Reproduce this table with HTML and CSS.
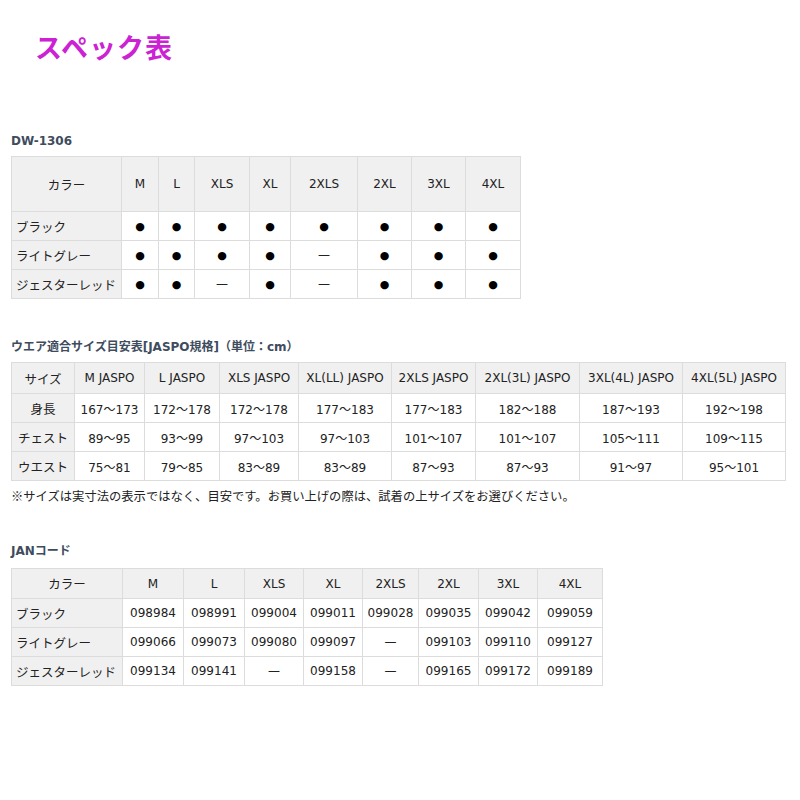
FILE: index.html
```html
<!DOCTYPE html>
<html lang="ja">
<head>
<meta charset="utf-8">
<title>スペック表</title>
<link rel="stylesheet" href="styles.css">
</head>
<body>
<div class="page">
  <h1 class="title">スペック表</h1>

  <h2 class="sec sec-1">DW-1306</h2>
  <table class="spec t1">
    <colgroup><col><col><col><col><col><col><col><col><col></colgroup>
    <thead>
      <tr><th>カラー</th><th>M</th><th>L</th><th>XLS</th><th>XL</th><th>2XLS</th><th>2XL</th><th>3XL</th><th>4XL</th></tr>
    </thead>
    <tbody>
      <tr><th class="rh">ブラック</th><td>●</td><td>●</td><td>●</td><td>●</td><td>●</td><td>●</td><td>●</td><td>●</td></tr>
      <tr><th class="rh">ライトグレー</th><td>●</td><td>●</td><td>●</td><td>●</td><td class="dash">—</td><td>●</td><td>●</td><td>●</td></tr>
      <tr><th class="rh">ジェスターレッド</th><td>●</td><td>●</td><td class="dash">—</td><td>●</td><td class="dash">—</td><td>●</td><td>●</td><td>●</td></tr>
    </tbody>
  </table>

  <h2 class="sec sec-2">ウエア適合サイズ目安表[JASPO規格]（単位：cm）</h2>
  <table class="spec t2">
    <colgroup><col><col><col><col><col><col><col><col><col></colgroup>
    <thead>
      <tr><th>サイズ</th><th>M JASPO</th><th>L JASPO</th><th>XLS JASPO</th><th>XL(LL) JASPO</th><th>2XLS JASPO</th><th>2XL(3L) JASPO</th><th>3XL(4L) JASPO</th><th>4XL(5L) JASPO</th></tr>
    </thead>
    <tbody>
      <tr><th class="rhc">身長</th><td>167～173</td><td>172～178</td><td>172～178</td><td>177～183</td><td>177～183</td><td>182～188</td><td>187～193</td><td>192～198</td></tr>
      <tr><th class="rhc">チェスト</th><td>89～95</td><td>93～99</td><td>97～103</td><td>97～103</td><td>101～107</td><td>101～107</td><td>105～111</td><td>109～115</td></tr>
      <tr><th class="rhc">ウエスト</th><td>75～81</td><td>79～85</td><td>83～89</td><td>83～89</td><td>87～93</td><td>87～93</td><td>91～97</td><td>95～101</td></tr>
    </tbody>
  </table>
  <p class="note">※サイズは実寸法の表示ではなく、目安です。お買い上げの際は、試着の上サイズをお選びください。</p>

  <h2 class="sec sec-3">JANコード</h2>
  <table class="spec t3">
    <colgroup><col><col><col><col><col><col><col><col><col></colgroup>
    <thead>
      <tr><th>カラー</th><th>M</th><th>L</th><th>XLS</th><th>XL</th><th>2XLS</th><th>2XL</th><th>3XL</th><th>4XL</th></tr>
    </thead>
    <tbody>
      <tr><th class="rh">ブラック</th><td>098984</td><td>098991</td><td>099004</td><td>099011</td><td>099028</td><td>099035</td><td>099042</td><td>099059</td></tr>
      <tr><th class="rh">ライトグレー</th><td>099066</td><td>099073</td><td>099080</td><td>099097</td><td class="dash">—</td><td>099103</td><td>099110</td><td>099127</td></tr>
      <tr><th class="rh">ジェスターレッド</th><td>099134</td><td>099141</td><td class="dash">—</td><td>099158</td><td class="dash">—</td><td>099165</td><td>099172</td><td>099189</td></tr>
    </tbody>
  </table>
</div>
</body>
</html>
```

FILE: styles.css
```css
html, body {
  margin: 0;
  padding: 0;
  background: #ffffff;
}

body {
  font-family: "DejaVu Sans", "Noto Sans CJK JP", sans-serif;
  font-size: 12px;
  color: #222222;
}

.page {
  padding: 0 0 0 11px;
  display: flex;
  flex-direction: column;
  align-items: flex-start;
}

.title {
  margin: 31px 0 0 24px;
  font-family: "Noto Sans CJK JP", sans-serif;
  font-size: 27px;
  line-height: 32px;
  font-weight: 700;
  color: #cc22d4;
  letter-spacing: 1px;
}

.sec {
  margin: 0;
  font-family: "DejaVu Sans", "Noto Sans CJK JP", sans-serif;
  font-size: 12px;
  line-height: 16px;
  font-weight: 700;
  color: #3e4c5e;
}

.sec-1 { margin-top: 70px; margin-bottom: 7px; }
.sec-2 { margin-top: 40px; margin-bottom: 7px; font-weight: 600; }
.sec-3 { margin-top: 39px; margin-bottom: 9px; font-weight: 600; }

.spec {
  border-collapse: collapse;
  table-layout: fixed;
  border: 1px solid #dcdcdc;
}

.spec th,
.spec td {
  border: 1px solid #dcdcdc;
  padding: 0 2px;
  text-align: center;
  font-weight: normal;
  white-space: nowrap;
  color: #222222;
}

.spec thead th {
  background: #f0f0f0;
}

.spec .rh {
  background: #f0f0f0;
  text-align: left;
  padding-left: 4px;
  font-size: 12.5px;
}

.spec .rhc {
  background: #f0f0f0;
  font-size: 12.5px;
}

.spec td {
  background: #ffffff;
  font-size: 12px;
}

/* table 1 */
.t1 { width: 510px; }
.t1 thead tr { height: 55px; }
.t1 tbody tr { height: 29px; }
.t1 col:nth-child(1) { width: 110px; }
.t1 col:nth-child(2) { width: 37px; }
.t1 col:nth-child(3) { width: 36px; }
.t1 col:nth-child(4) { width: 55px; }
.t1 col:nth-child(5) { width: 41px; }
.t1 col:nth-child(6) { width: 67px; }
.t1 col:nth-child(7) { width: 54px; }
.t1 col:nth-child(8) { width: 54px; }
.t1 col:nth-child(9) { width: 55px; }
.t1 thead th { font-size: 12px; }
.t1 thead th:first-child { font-size: 12.5px; }
.t1 td { font-size: 11px; color: #000000; }
.t1 td.dash { font-size: 12px; color: #222222; }

/* table 2 */
.t2 { width: 775px; }
.t2 thead tr { height: 31px; }
.t2 tbody tr { height: 29px; }
.t2 col:nth-child(1) { width: 63px; }
.t2 col:nth-child(2) { width: 70px; }
.t2 col:nth-child(3) { width: 75px; }
.t2 col:nth-child(4) { width: 79px; }
.t2 col:nth-child(5) { width: 93px; }
.t2 col:nth-child(6) { width: 84px; }
.t2 col:nth-child(7) { width: 104px; }
.t2 col:nth-child(8) { width: 103px; }
.t2 col:nth-child(9) { width: 103px; }
.t2 thead th { font-size: 12px; }
.t2 thead th:first-child { font-size: 12.5px; }
.t2 td { font-size: 12px; }

.note {
  margin: 7px 0 0 0;
  font-size: 12.3px;
  line-height: 16px;
  color: #222222;
  font-family: "Noto Sans CJK JP", sans-serif;
}

/* table 3 */
.t3 { width: 592px; }
.t3 thead tr { height: 30px; }
.t3 tbody tr { height: 29px; }
.t3 col:nth-child(1) { width: 111px; }
.t3 col:nth-child(2) { width: 61px; }
.t3 col:nth-child(3) { width: 61px; }
.t3 col:nth-child(4) { width: 59px; }
.t3 col:nth-child(5) { width: 59px; }
.t3 col:nth-child(6) { width: 56px; }
.t3 col:nth-child(7) { width: 60px; }
.t3 col:nth-child(8) { width: 59px; }
.t3 col:nth-child(9) { width: 65px; }
.t3 thead th { font-size: 12px; }
.t3 thead th:first-child { font-size: 12.5px; }
.t3 td { font-size: 12px; }
```
